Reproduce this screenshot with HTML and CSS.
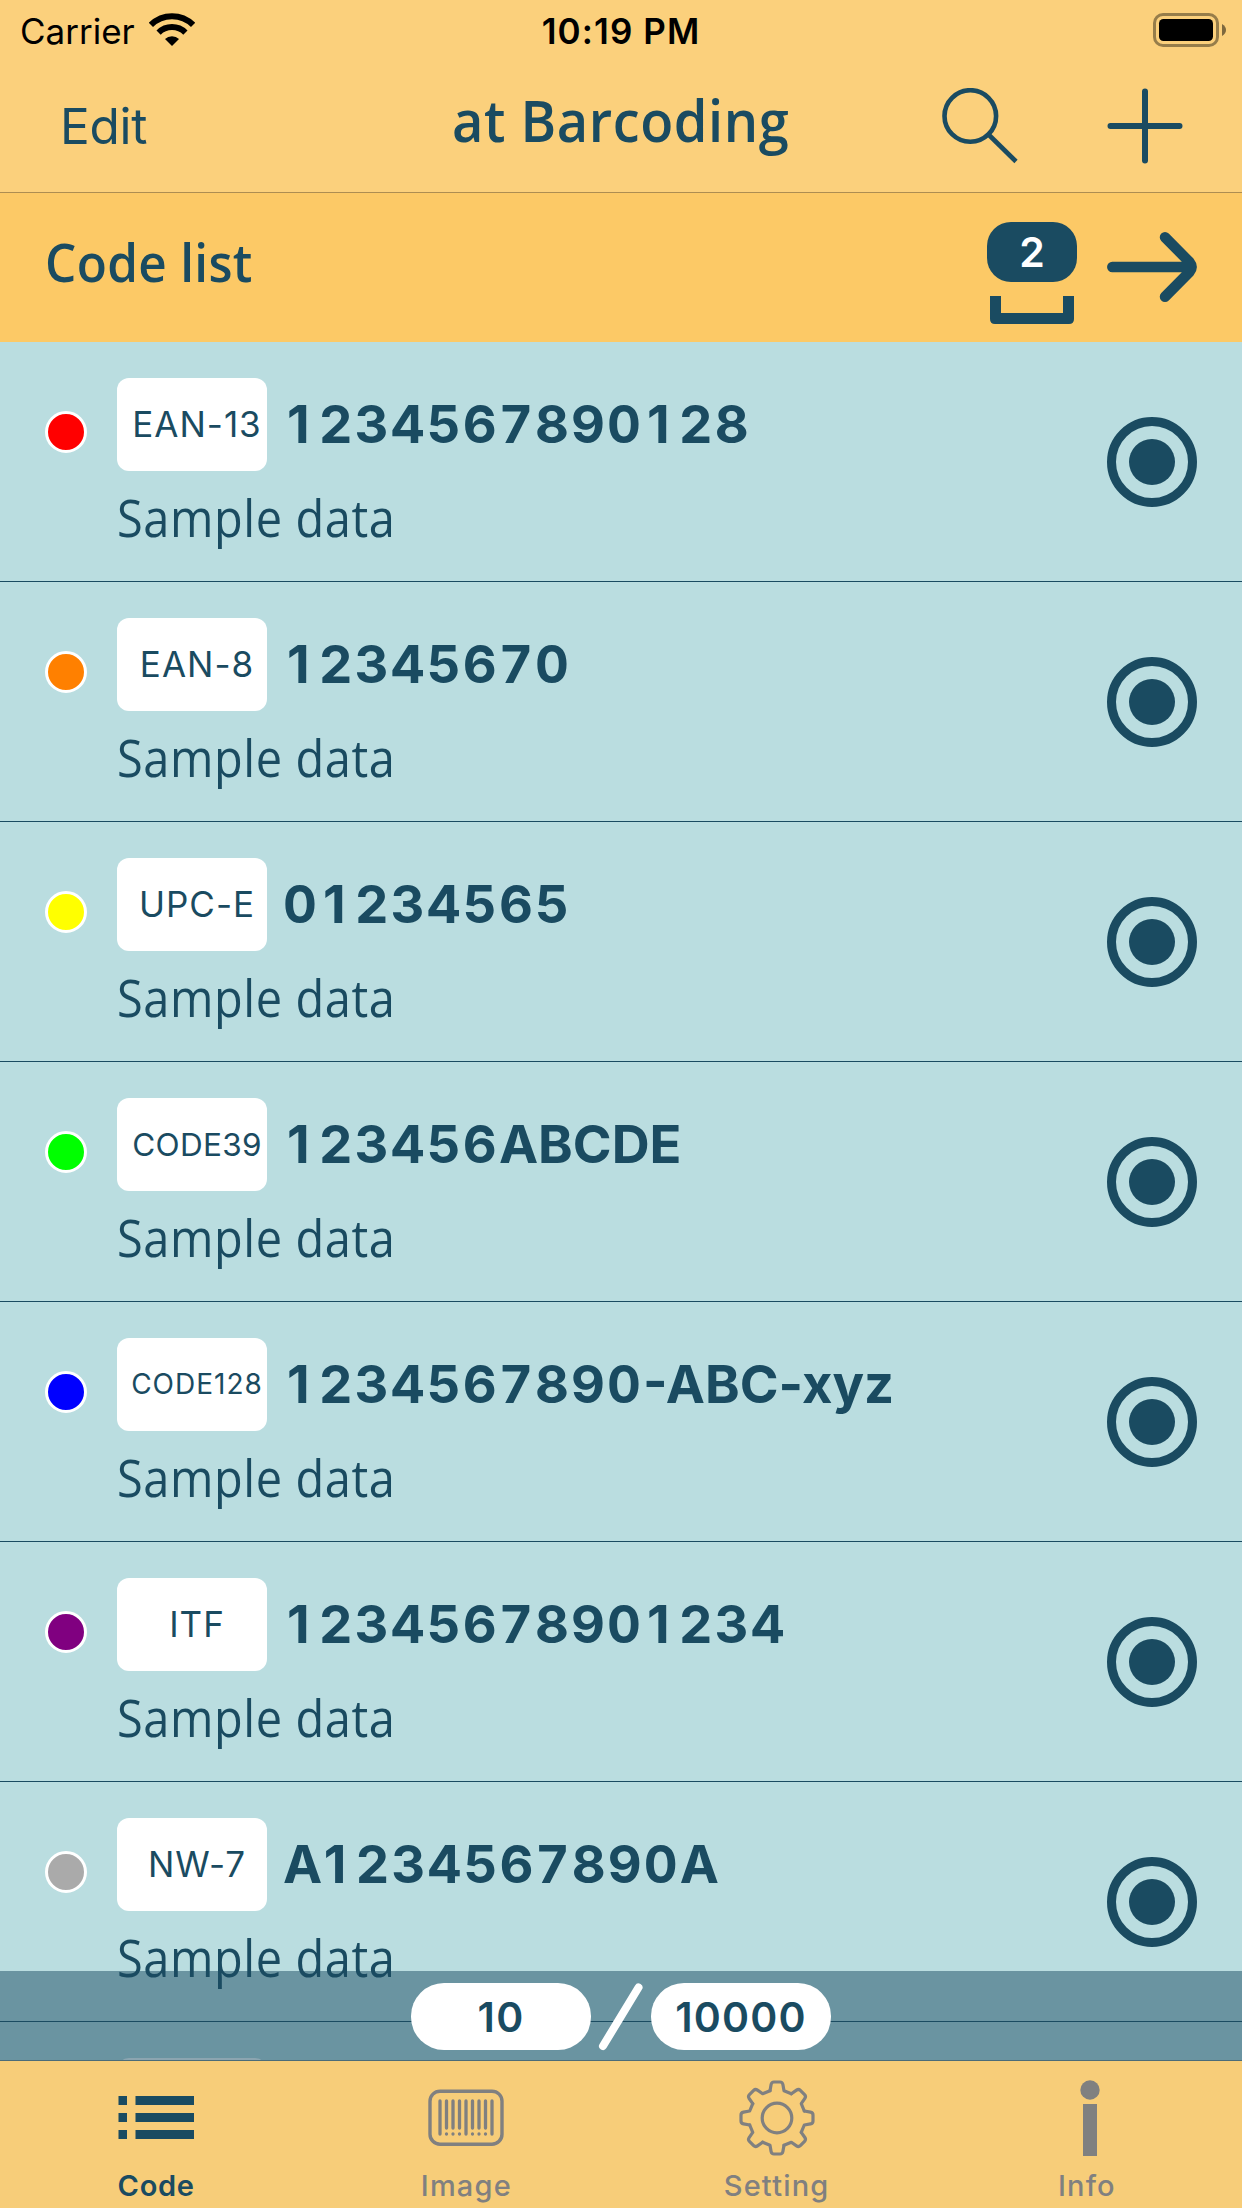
FILE: index.html
```html
<!DOCTYPE html>
<html lang="en">
<head>
<meta charset="utf-8">
<title>at Barcoding</title>
<link rel="stylesheet" href="styles.css">
</head>
<body>
<div class="app">
  <header class="header">
    <div class="status">
      <div class="status-left">
        <span>Carrier</span>
        <svg class="wifi" width="46" height="34" viewBox="0 0 46 34" fill="none" stroke="#000">
          <path d="M1.9 11.8A30 30 0 0 1 44.1 11.8" stroke-width="6"/>
          <path d="M9.6 19.6A19 19 0 0 1 36.4 19.6" stroke-width="6"/>
          <path d="M23 33L16 26A10 10 0 0 1 30 26Z" fill="#000" stroke="none"/>
        </svg>
      </div>
      <div class="clock">10:19 PM</div>
      <svg class="battery" width="74" height="34" viewBox="0 0 74 34">
        <rect x="1.5" y="1.5" width="63" height="31" rx="8.5" fill="none" stroke="#000" stroke-opacity=".4" stroke-width="3"/>
        <rect x="6" y="6" width="54" height="22" rx="4.5" fill="#000"/>
        <path d="M69 11Q73 13.5 73 17T69 23Z" fill="#000" fill-opacity=".5"/>
      </svg>
    </div>
    <nav class="nav">
      <a class="edit">Edit</a>
      <h1 class="title">at Barcoding</h1>
      <div class="nav-actions">
        <svg width="76" height="76" viewBox="0 0 76 76" fill="none" stroke="#1a4b61" stroke-width="4.6">
          <ellipse cx="28.3" cy="28" rx="25.8" ry="25.8"/>
          <path d="M46.5 46.5L74 73.5"/>
        </svg>
        <svg width="76" height="76" viewBox="0 0 76 76" stroke="#1a4b61" stroke-width="6" stroke-linecap="round">
          <path d="M38 3.5V72.5M3.5 38H72.5"/>
        </svg>
      </div>
    </nav>
  </header>

  <section class="listbar">
    <h2 class="listbar-title">Code list</h2>
    <div class="listbar-actions">
      <div class="tray">
        <span class="tray-count">2</span>
        <svg width="84" height="28" viewBox="0 0 84 28" fill="#1a4b61"><path d="M0 0H11V17H73V0H84V23Q84 28 79 28H5Q0 28 0 23Z"/></svg>
      </div>
      <svg width="90" height="72" viewBox="0 0 90 72" fill="none" stroke="#1a4b61" stroke-width="10.5" stroke-linecap="round" stroke-linejoin="round">
        <path d="M5.3 36H84M58 6.3L82.5 31Q86.5 36 82.5 41L58 65.7"/>
      </svg>
    </div>
  </section>

  <main class="list">
    <article class="row">
      <i class="dot red"></i>
      <div class="entry"><div class="code"><span class="kind">EAN-13</span><b class="value"><span class="one">1</span>234567890<span class="one">1</span>28</b></div><p class="note">Sample data</p></div>
      <i class="radio"></i>
    </article>
    <article class="row">
      <i class="dot orange"></i>
      <div class="entry"><div class="code"><span class="kind">EAN-8</span><b class="value"><span class="one">1</span>2345670</b></div><p class="note">Sample data</p></div>
      <i class="radio"></i>
    </article>
    <article class="row">
      <i class="dot yellow"></i>
      <div class="entry"><div class="code"><span class="kind">UPC-E</span><b class="value">0<span class="one">1</span>234565</b></div><p class="note">Sample data</p></div>
      <i class="radio"></i>
    </article>
    <article class="row">
      <i class="dot green"></i>
      <div class="entry"><div class="code"><span class="kind kind-md">CODE39</span><b class="value"><span class="one">1</span>23456<span class="alpha">ABCDE</span></b></div><p class="note">Sample data</p></div>
      <i class="radio"></i>
    </article>
    <article class="row">
      <i class="dot blue"></i>
      <div class="entry"><div class="code"><span class="kind kind-sm">CODE128</span><b class="value"><span class="one">1</span>234567890<span class="alpha">-ABC-xyz</span></b></div><p class="note">Sample data</p></div>
      <i class="radio"></i>
    </article>
    <article class="row">
      <i class="dot purple"></i>
      <div class="entry"><div class="code"><span class="kind">ITF</span><b class="value"><span class="one">1</span>234567890<span class="one">1</span>234</b></div><p class="note">Sample data</p></div>
      <i class="radio"></i>
    </article>
    <article class="row">
      <i class="dot gray"></i>
      <div class="entry"><div class="code"><span class="kind">NW-7</span><b class="value"><span class="lead">A</span><span class="one">1</span>234567890<span class="alpha">A</span></b></div><p class="note">Sample data</p></div>
      <i class="radio"></i>
    </article>
    <article class="row">
      <i class="dot gray"></i>
      <div class="entry"><div class="code"><span class="kind"></span></div></div>
      <i class="radio"></i>
    </article>
    <div class="counter">
      <span class="pill">10</span>
      <svg width="60" height="68" viewBox="0 0 60 68" stroke="#fff" stroke-width="8" stroke-linecap="round"><path d="M12 63L47.500 4.500"/></svg>
      <span class="pill">10000</span>
    </div>
  </main>

  <footer class="tabs">
    <a class="tab active">
      <svg width="76" height="76" viewBox="0 0 76 76" fill="#1a4b61">
        <path d="M0.5 16H9V25H0.5ZM17.5 16H76V25H17.5ZM0.5 33H9V42H0.5ZM17.5 33H76V42H17.5ZM0.5 50H9V59H0.5ZM17.5 50H76V59H17.5Z"/>
      </svg>
      <span>Code</span>
    </a>
    <a class="tab">
      <svg width="76" height="76" viewBox="0 0 76 76" fill="none" stroke="#808080" stroke-linecap="round">
        <rect x="2" y="11.2" width="72" height="53" rx="10" stroke-width="3.4"/>
        <path d="M12 21V54M38 21V54M64 21V54M18.5 21V48M25 21V48M31.5 21V48M44.5 21V48M51 21V48M57.5 21V48M18.5 54V54.01M25 54V54.01M31.5 54V54.01M44.5 54V54.01M51 54V54.01M57.5 54V54.01" stroke-width="3.3"/>
      </svg>
      <span>Image</span>
    </a>
    <a class="tab">
      <svg width="76" height="76" viewBox="-38 -38 76 76" fill="none" stroke="#808080" stroke-width="3.2" stroke-linecap="round" stroke-linejoin="round">
        <defs><path id="tooth" d="M-7 -27.3L-5.9 -33.5Q-5.4 -36 -3 -36H3Q5.4 -36 5.9 -33.5L7 -27.3L14.35 -24.25"/></defs>
        <circle r="14.8"/>
        <use href="#tooth"/>
        <use href="#tooth" transform="rotate(45)"/>
        <use href="#tooth" transform="rotate(90)"/>
        <use href="#tooth" transform="rotate(135)"/>
        <use href="#tooth" transform="rotate(180)"/>
        <use href="#tooth" transform="rotate(225)"/>
        <use href="#tooth" transform="rotate(270)"/>
        <use href="#tooth" transform="rotate(315)"/>
      </svg>
      <span>Setting</span>
    </a>
    <a class="tab">
      <svg width="76" height="76" viewBox="0 0 76 76" fill="#808080">
        <circle cx="41" cy="10" r="9.7"/><rect x="34" y="24" width="14" height="52"/>
      </svg>
      <span>Info</span>
    </a>
  </footer>
</div>
</body>
</html>
```
FILE: styles.css
```css
* { box-sizing: border-box; margin: 0; padding: 0; }

body {
  width: 1242px;
  height: 2208px;
  overflow: hidden;
  color: #1a4b61;
  font-family: Inter, "Liberation Sans", sans-serif;
}

svg { display: block; flex: none; }

.app { display: flex; flex-direction: column; height: 2208px; }

.header { height: 193px; background: #fbd07c; border-bottom: 1px solid #ad8d51; }

.status {
  display: grid;
  grid-template-columns: 1fr auto 1fr;
  height: 62px;
  padding: 0 15px 0 20px;
  color: #000;
  font-size: 35px;
  line-height: 62px;
}
.status-left { display: flex; gap: 14px; }
.wifi { margin-top: 13px; }
.clock { padding-right: 5px; font-weight: 600; letter-spacing: 1.1px; }
.battery { justify-self: end; margin-top: 13px; }

.nav {
  display: grid;
  grid-template-columns: 1fr auto 1fr;
  align-items: center;
  height: 128px;
  padding: 0 59px 0 60px;
}
.edit { font-size: 49.5px; letter-spacing: -.3px; }
.title {
  padding: 0 2px 13px 0;
  font: 600 57px/80px "Open Sans", sans-serif;
  letter-spacing: .6px;
  transform: scaleX(.95);
}
.nav-actions { display: flex; justify-content: flex-end; gap: 89px; }

.listbar {
  display: flex;
  justify-content: space-between;
  height: 149px;
  padding: 0 45px 0 45px;
  background: #fcc966;
}
.listbar-title {
  font: 600 52px/137px "Open Sans", sans-serif;
  letter-spacing: .36px;
  transform: scaleX(.95);
  transform-origin: left;
}
.listbar-actions { display: flex; align-items: center; gap: 30px; padding-bottom: 2px; }
.tray { display: flex; flex-direction: column; align-items: center; gap: 14px; padding-top: 12px; }
.tray-count {
  width: 90px;
  height: 60px;
  border-radius: 24px;
  background: #1a4b61;
  color: #fff;
  font-size: 41px;
  font-weight: 600;
  line-height: 60px;
  text-align: center;
}

.list { position: relative; flex: 1; overflow: hidden; background: #badde0; }
.row {
  display: grid;
  grid-template-columns: 42px 1fr 90px;
  column-gap: 30px;
  height: 240px;
  padding: 0 45px;
  border-bottom: 1px solid #1a4b61;
}
.dot { height: 42px; margin-top: 69px; border: 3px solid #fff; border-radius: 50%; }
.red { background: #f00; }
.orange { background: #ff8000; }
.yellow { background: #ff0; }
.green { background: #0f0; }
.blue { background: #00f; }
.purple { background: #800080; }
.gray { background: #aaa; }

.entry { padding-top: 36px; }
.code { display: flex; gap: 16px; height: 93px; line-height: 93px; }
.kind {
  width: 150px;
  padding-left: 10px;
  border-radius: 12px;
  background: #fff;
  font-size: 35px;
  letter-spacing: 1px;
  text-align: center;
}
.kind-md { font-size: 31.5px; letter-spacing: .3px; }
.kind-sm { font-size: 28px; letter-spacing: 1px; }
.value { font-size: 52.5px; font-variant-numeric: tabular-nums; letter-spacing: 2.1px; white-space: nowrap; }
/* A narrow "1" set in a cell as wide as the other digits. */
.one { display: inline-block; width: 35.7px; padding-left: 4px; font-variant-numeric: normal; letter-spacing: 0; }
.alpha { font-variant-numeric: normal; letter-spacing: 0; }
.lead { letter-spacing: -2.5px; }
.note {
  font: 400 51px/92px "Open Sans", sans-serif;
  letter-spacing: .65px;
  transform: scaleX(.92);
  transform-origin: left;
}

.radio {
  display: grid;
  place-items: center;
  height: 90px;
  margin-top: 75px;
  border: 9px solid #1a4b61;
  border-radius: 50%;
}
.radio::after { content: ""; width: 46px; height: 46px; border-radius: 50%; background: #1a4b61; }

.counter {
  position: absolute;
  inset: auto 0 0;
  display: flex;
  justify-content: center;
  height: 90px;
  padding-top: 12px;
  border-bottom: 1px solid #4c6c78;
  background: rgba(26, 75, 97, .5);
}
.pill {
  width: 180px;
  height: 67px;
  border-radius: 33px;
  background: #fff;
  font-size: 41px;
  font-weight: 600;
  letter-spacing: 1.2px;
  line-height: 68px;
  text-align: center;
}

.tabs { display: grid; grid-template-columns: repeat(4, 1fr); height: 147px; padding-left: 1px; background: #f7cd79; }
.tab {
  display: flex;
  flex-direction: column;
  align-items: center;
  padding-top: 19px;
  color: #808080;
  font-size: 29px;
  font-weight: 500;
  letter-spacing: 1.2px;
  line-height: 60px;
}
.active { color: #1a4b61; font-weight: 600; letter-spacing: .7px; }
```
